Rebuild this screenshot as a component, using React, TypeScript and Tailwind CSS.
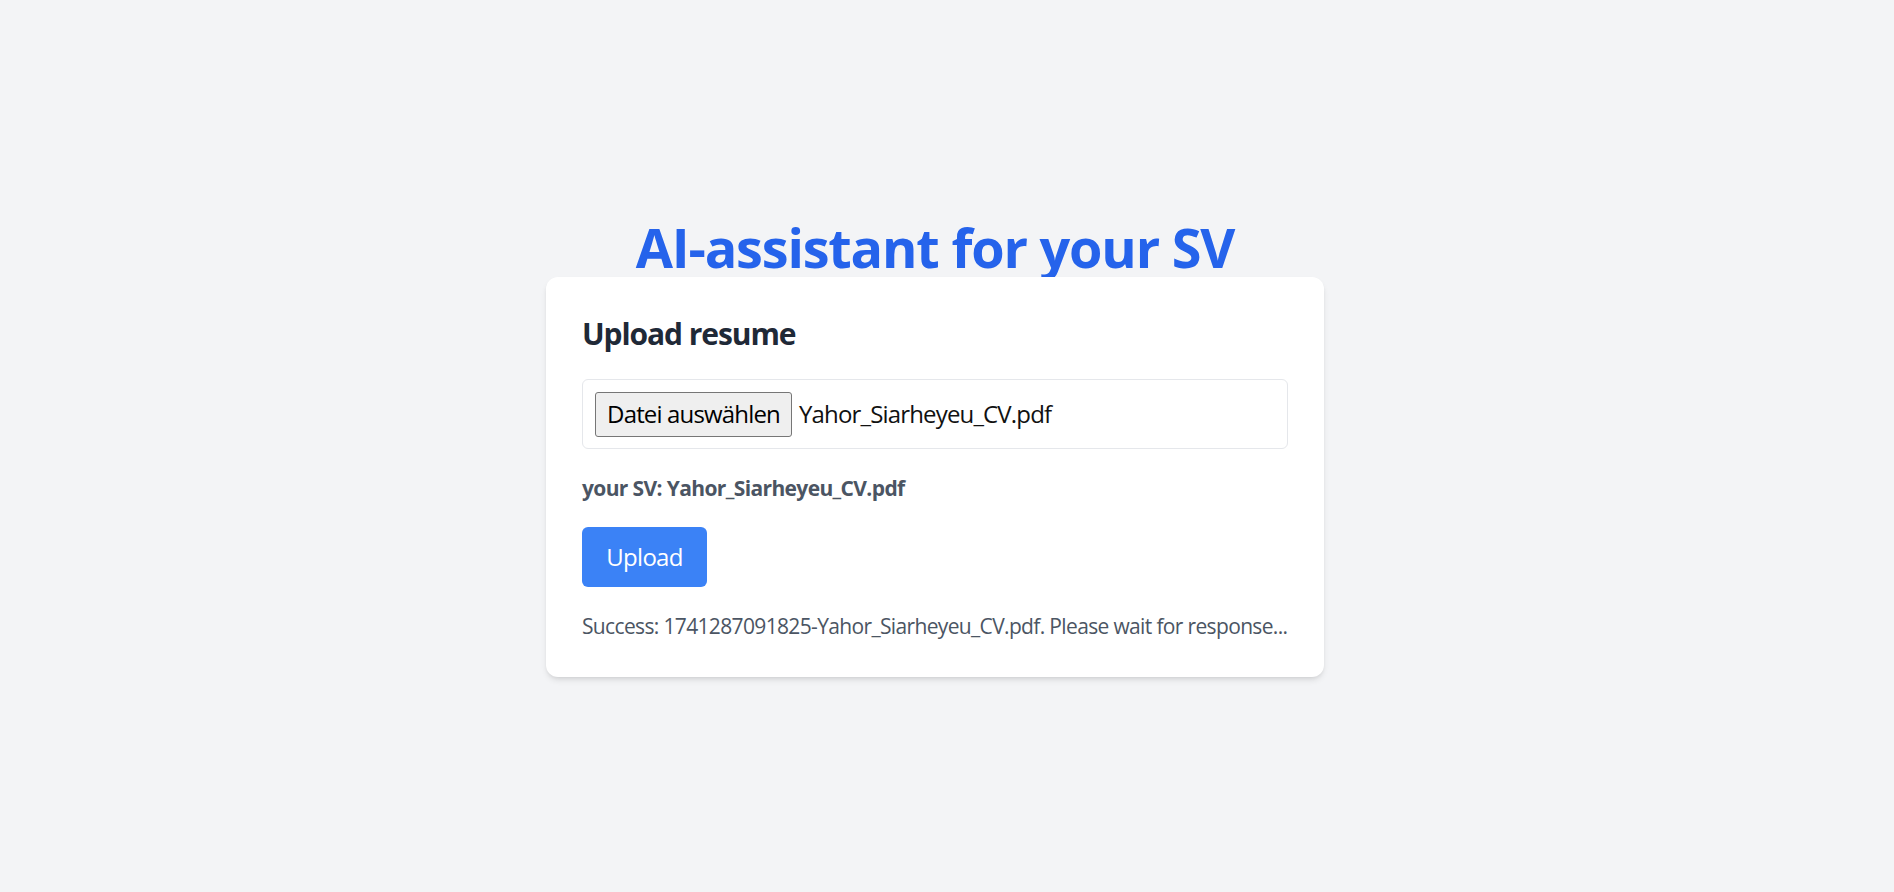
export default function App() {
  return (
    <div
      className="min-h-screen w-full bg-[#f3f4f6] flex flex-col items-center justify-center pr-[24px] pt-[2px]"
      style={{ fontFamily: '"Open Sans", "Noto Sans", sans-serif' }}
    >
      <h1 className="text-[54px] leading-[60px] font-bold text-[#2563eb] tracking-[-0.022em]">
        AI-assistant for your SV
      </h1>
      <div className="relative w-[778px] bg-white rounded-xl shadow-md p-[36px] flex flex-col gap-[24px]">
        <h2 className="text-[30px] leading-[42px] font-bold text-[#1f2937] tracking-[-0.036em]">
          Upload resume
        </h2>
        <div className="h-[70px] w-full border border-[#e5e7eb] rounded-[6px] flex items-center px-[12px]">
          <span className="h-[45px] w-[197px] shrink-0 flex items-center justify-center bg-[#efefef] border border-[#767676] rounded-[3px] text-[24px] text-black tracking-[-0.035em]">
            Datei auswählen
          </span>
          <span className="ml-[7px] text-[24px] text-[#111111] tracking-[-0.035em]">
            Yahor_Siarheyeu_CV.pdf
          </span>
        </div>
        <p className="text-[21px] leading-[30px] font-bold text-[#4b5563] tracking-[-0.03em]">
          your SV: Yahor_Siarheyeu_CV.pdf
        </p>
        <div>
          <button className="h-[60px] w-[125px] bg-[#3b82f6] rounded-[6px] text-white text-[24px] tracking-[-0.03em] flex items-center justify-center">
            Upload
          </button>
        </div>
        <p className="text-[21px] leading-[30px] text-[#4b5563] whitespace-nowrap tracking-[-0.031em]">
          Success: 1741287091825-Yahor_Siarheyeu_CV.pdf. Please wait for response...
        </p>
      </div>
    </div>
  );
}
